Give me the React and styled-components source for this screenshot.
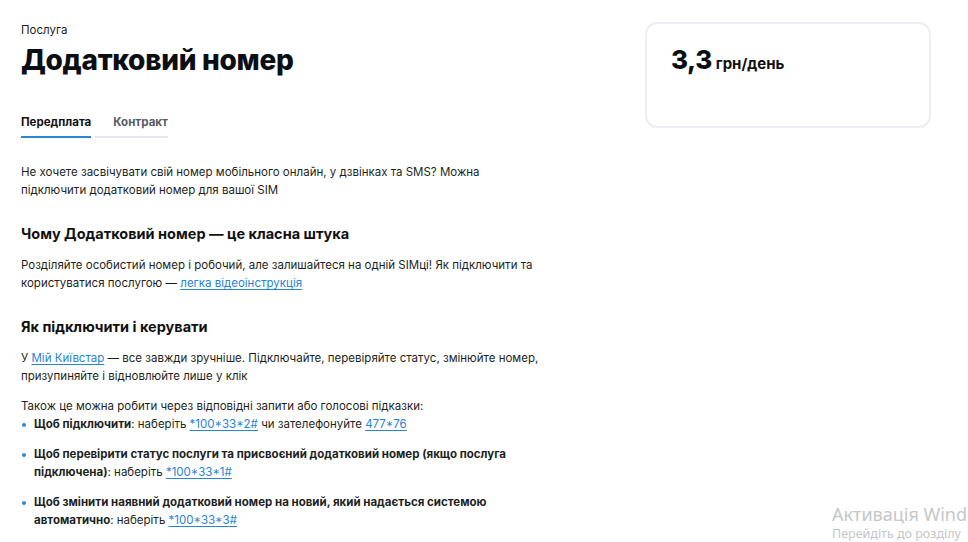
import React from 'react';
import styled, { createGlobalStyle } from 'styled-components';

const Global = createGlobalStyle`
  html, body {
    margin: 0;
    padding: 0;
    background: #fff;
  }
  body {
    font-family: Inter, "Noto Sans", sans-serif;
    color: #1d1f22;
  }
`;

const Page = styled.div`
  display: flex;
  align-items: flex-start;
  padding: 22px 37px 0 21px;
  gap: 104px;
  height: 542px;
  box-sizing: border-box;
  overflow: hidden;
  position: relative;
`;

const Main = styled.main`
  width: 520px;
  flex-shrink: 0;
`;

const Kicker = styled.div`
  font-size: 11.5px;
  line-height: 16px;
  color: #1b1d20;
`;

const Title = styled.h1`
  margin: 4px 0 0;
  font-size: 28px;
  line-height: 36px;
  font-weight: 800;
  color: #0b0f14;
  letter-spacing: -0.3px;
`;

const Tabs = styled.div`
  display: flex;
  margin-top: 36px;
`;

const Tab = styled.div`
  font-size: 11.5px;
  line-height: 16px;
  font-weight: 700;
  color: ${p => (p.$active ? '#111' : '#555b62')};
  padding: 0 0 6px ${p => (p.$active ? '0' : '18px')};
  margin-left: ${p => (p.$active ? '0' : '4px')};
  border-bottom: 2px solid ${p => (p.$active ? '#2d86d4' : '#e6e8eb')};
`;

const Paragraph = styled.p`
  margin: ${p => p.$top}px 0 0;
  font-size: 11.5px;
  line-height: 18px;
`;

const Heading = styled.h2`
  margin: 25px 0 0;
  font-size: 14.5px;
  line-height: 20px;
  font-weight: 700;
  color: #111;
`;

const Link = styled.a`
  color: #2784d3;
  text-decoration: underline;
  text-underline-offset: 2px;
`;

const List = styled.ul`
  list-style: none;
  margin: 0;
  padding: 0;
  display: flex;
  flex-direction: column;
  gap: 12px;
`;

const Item = styled.li`
  position: relative;
  padding-left: 13px;
  font-size: 11.5px;
  line-height: 18px;

  &::before {
    content: '';
    position: absolute;
    left: 1px;
    top: 8px;
    width: 4px;
    height: 4px;
    border-radius: 50%;
    background: #2d86d4;
  }

  b {
    font-weight: 700;
  }
`;

const PriceCard = styled.aside`
  width: 286px;
  height: 106px;
  box-sizing: border-box;
  border: 2px solid #eceef1;
  border-radius: 12px;
  padding: 20px 24px;
  display: flex;
  align-items: baseline;
  gap: 4px;
`;

const Amount = styled.span`
  font-size: 26px;
  font-weight: 800;
  color: #0b0f14;
  letter-spacing: -0.5px;
`;

const Unit = styled.span`
  font-size: 15px;
  font-weight: 700;
  color: #111;
`;

const Watermark = styled.div`
  position: absolute;
  left: 832px;
  top: 503px;
  color: #c4c6c8;
  font-family: "Segoe UI", "Noto Sans", sans-serif;
  white-space: nowrap;
`;

const WmTitle = styled.div`
  font-size: 18px;
  line-height: 22px;
`;

const WmSub = styled.div`
  font-size: 12.5px;
  line-height: 18px;
`;

export default function App() {
  return (
    <>
      <Global />
      <Page>
        <Main>
          <Kicker>Послуга</Kicker>
          <Title>Додатковий номер</Title>
          <Tabs>
            <Tab $active>Передплата</Tab>
            <Tab>Контракт</Tab>
          </Tabs>
          <Paragraph $top={25}>
            Не хочете засвічувати свій номер мобільного онлайн, у дзвінках та SMS? Можна
            підключити додатковий номер для вашої SIM
          </Paragraph>
          <Heading>Чому Додатковий номер — це класна штука</Heading>
          <Paragraph $top={12}>
            Розділяйте особистий номер і робочий, але залишайтеся на одній SIMці! Як підключити та
            користуватися послугою — <Link href="#">легка відеоінструкція</Link>
          </Paragraph>
          <Heading>Як підключити і керувати</Heading>
          <Paragraph $top={12}>
            У <Link href="#">Мій Київстар</Link> — все завжди зручніше. Підключайте, перевіряйте статус, змінюйте номер,
            призупиняйте і відновлюйте лише у клік
          </Paragraph>
          <Paragraph $top={12}>Також це можна робити через відповідні запити або голосові підказки:</Paragraph>
          <List>
            <Item>
              <b>Щоб підключити</b>: наберіть <Link href="#">*100*33*2#</Link> чи зателефонуйте{' '}
              <Link href="#">477*76</Link>
            </Item>
            <Item>
              <b>Щоб перевірити статус послуги та присвоєний додатковий номер (якщо послуга підключена)</b>: наберіть{' '}
              <Link href="#">*100*33*1#</Link>
            </Item>
            <Item>
              <b>Щоб змінити наявний додатковий номер на новий, який надається системою автоматично</b>: наберіть{' '}
              <Link href="#">*100*33*3#</Link>
            </Item>
          </List>
        </Main>
        <PriceCard>
          <Amount>3,3</Amount>
          <Unit>грн/день</Unit>
        </PriceCard>
        <Watermark>
          <WmTitle>Активація Windows</WmTitle>
          <WmSub>Перейдіть до розділу</WmSub>
        </Watermark>
      </Page>
    </>
  );
}
